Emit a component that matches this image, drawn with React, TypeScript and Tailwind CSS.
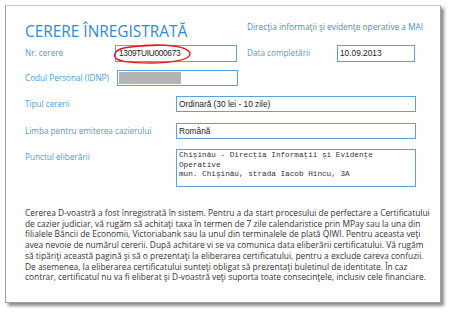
import React from "react";

const lines = [
  "Cererea D-voastră a fost înregistrată în sistem. Pentru a da start procesului de perfectare a Certificatului",
  "de cazier judiciar, vă rugăm să achitaţi taxa în termen de 7 zile calendaristice prin MPay sau la una din",
  "filialele Băncii de Economii, Victoriabank sau la unul din terminalele de plată QIWI. Pentru aceasta veţi",
  "avea nevoie de numărul cererii. După achitare vi se va comunica data eliberării certificatului. Vă rugăm",
  "să tipăriţi această pagină şi să o prezentaţi la eliberarea certificatului, pentru a exclude careva confuzii.",
  "De asemenea, la eliberarea certificatului sunteţi obligat să prezentaţi buletinul de identitate. În caz",
  "contrar, certificatul nu va fi eliberat şi D-voastră veţi suporta toate consecinţele, inclusiv cele financiare.",
];

export default function App() {
  const sans = { fontFamily: '"Open Sans", "Noto Sans", sans-serif' };
  const arial = { fontFamily: '"Liberation Sans", Arial, sans-serif' };
  const mono = { fontFamily: '"Liberation Mono", "Courier New", monospace' };
  const label = "text-[8.2px] text-[#4a9ce0] whitespace-nowrap";
  const val = "text-[8.3px] text-[#1a1a1a]";
  return (
    <div className="w-[451px] h-[315px] bg-white overflow-hidden pt-[5px] pl-[5px]">
      <div
        className="relative w-[436px] h-[298px] bg-white border border-[#a0a0a0] border-t-[#c8c8c8] shadow-[3px_3px_3px_rgba(0,0,0,0.45)] flex flex-col"
        style={sans}
      >
        {/* header */}
        <div className="flex items-start h-[38px] pl-[19px]">
          <div className="w-[222px] pt-[16px] text-[15.4px] leading-[20px] text-[#2e8ad8] font-normal whitespace-nowrap">
            CERERE ÎNREGISTRATĂ
          </div>
          <div className="pt-[15px] text-[8.3px] leading-[12px] text-[#3a8fd6] whitespace-nowrap">
            Direcţia informaţii şi evidenţe operative a MAI
          </div>
        </div>
        {/* Nr cerere row */}
        <div className="flex items-center h-[17px] mt-[1px] pl-[19px]">
          <div className={`w-[90px] ${label}`}>Nr. cerere</div>
          <div className="relative w-[122px] h-[17px] border border-[#5aa2dc] flex items-center pl-[3px]">
            <span className={`${val} tracking-[-0.3px]`} style={arial}>1309TUIU000673</span>
            <svg className="absolute left-[-3px] top-[-3px]" width="82" height="22" viewBox="0 0 82 22">
              <path
                d="M30 2.5 C 52 1, 74 3, 77 10 C 79 17, 57 20, 38 20 C 18 20, 1 19, 1.5 12 C 2 5, 15 3, 44 2.2"
                fill="none"
                stroke="#e01b1b"
                strokeWidth="1.4"
              />
            </svg>
          </div>
          <div className={`w-[100px] pl-[10px] ${label}`}>Data completării</div>
          <div className="w-[78px] h-[17px] border border-[#5aa2dc] flex items-center pl-[2px]">
            <span className={val} style={arial}>10.09.2013</span>
          </div>
        </div>
        {/* IDNP row */}
        <div className="flex items-center h-[16px] mt-[8px] pl-[19px]">
          <div className={`w-[92px] ${label}`}>Codul Personal (IDNP)</div>
          <div className="w-[121px] h-[16px] border border-[#5aa2dc] flex items-center pl-[1px]">
            <div className="w-[62px] h-[12px] bg-[#b4b4b4]" />
          </div>
        </div>
        {/* Tipul */}
        <div className="flex items-start h-[16px] mt-[10px] pl-[19px]">
          <div className={`w-[151px] leading-[16px] ${label}`}>Tipul cererii</div>
          <div className="w-[240px] h-[16px] border border-[#5aa2dc] flex items-center pl-[2px]">
            <span className={val} style={arial}>Ordinară (30 lei - 10 zile)</span>
          </div>
        </div>
        {/* Limba */}
        <div className="flex items-start h-[16px] mt-[11px] pl-[19px]">
          <div className={`w-[151px] leading-[16px] ${label}`}>Limba pentru emiterea cazierului</div>
          <div className="w-[240px] h-[16px] border border-[#5aa2dc] flex items-center pl-[2px]">
            <span className={val} style={arial}>Română</span>
          </div>
        </div>
        {/* Punctul */}
        <div className="flex items-start h-[38px] mt-[10px] pl-[19px]">
          <div className={`w-[151px] leading-[16px] ${label}`}>Punctul eliberării</div>
          <div className="w-[240px] h-[38px] border border-[#5aa2dc] pl-[2px] pt-[1px]">
            <div className="text-[7.7px] leading-[9.5px] text-[#333]" style={mono}>
              Chişinău - Direcţia Informaţii şi Evidenţe
              <br />
              Operative
              <br />
              mun. Chişinău, strada Iacob Hîncu, 3A
            </div>
          </div>
        </div>
        {/* paragraph */}
        <div className="mt-[21px] pl-[19px] text-[8.4px] leading-[10.7px] text-[#333]">
          {lines.map((l, i) => (
            <div key={i} className="whitespace-nowrap">{l}</div>
          ))}
        </div>
      </div>
    </div>
  );
}
